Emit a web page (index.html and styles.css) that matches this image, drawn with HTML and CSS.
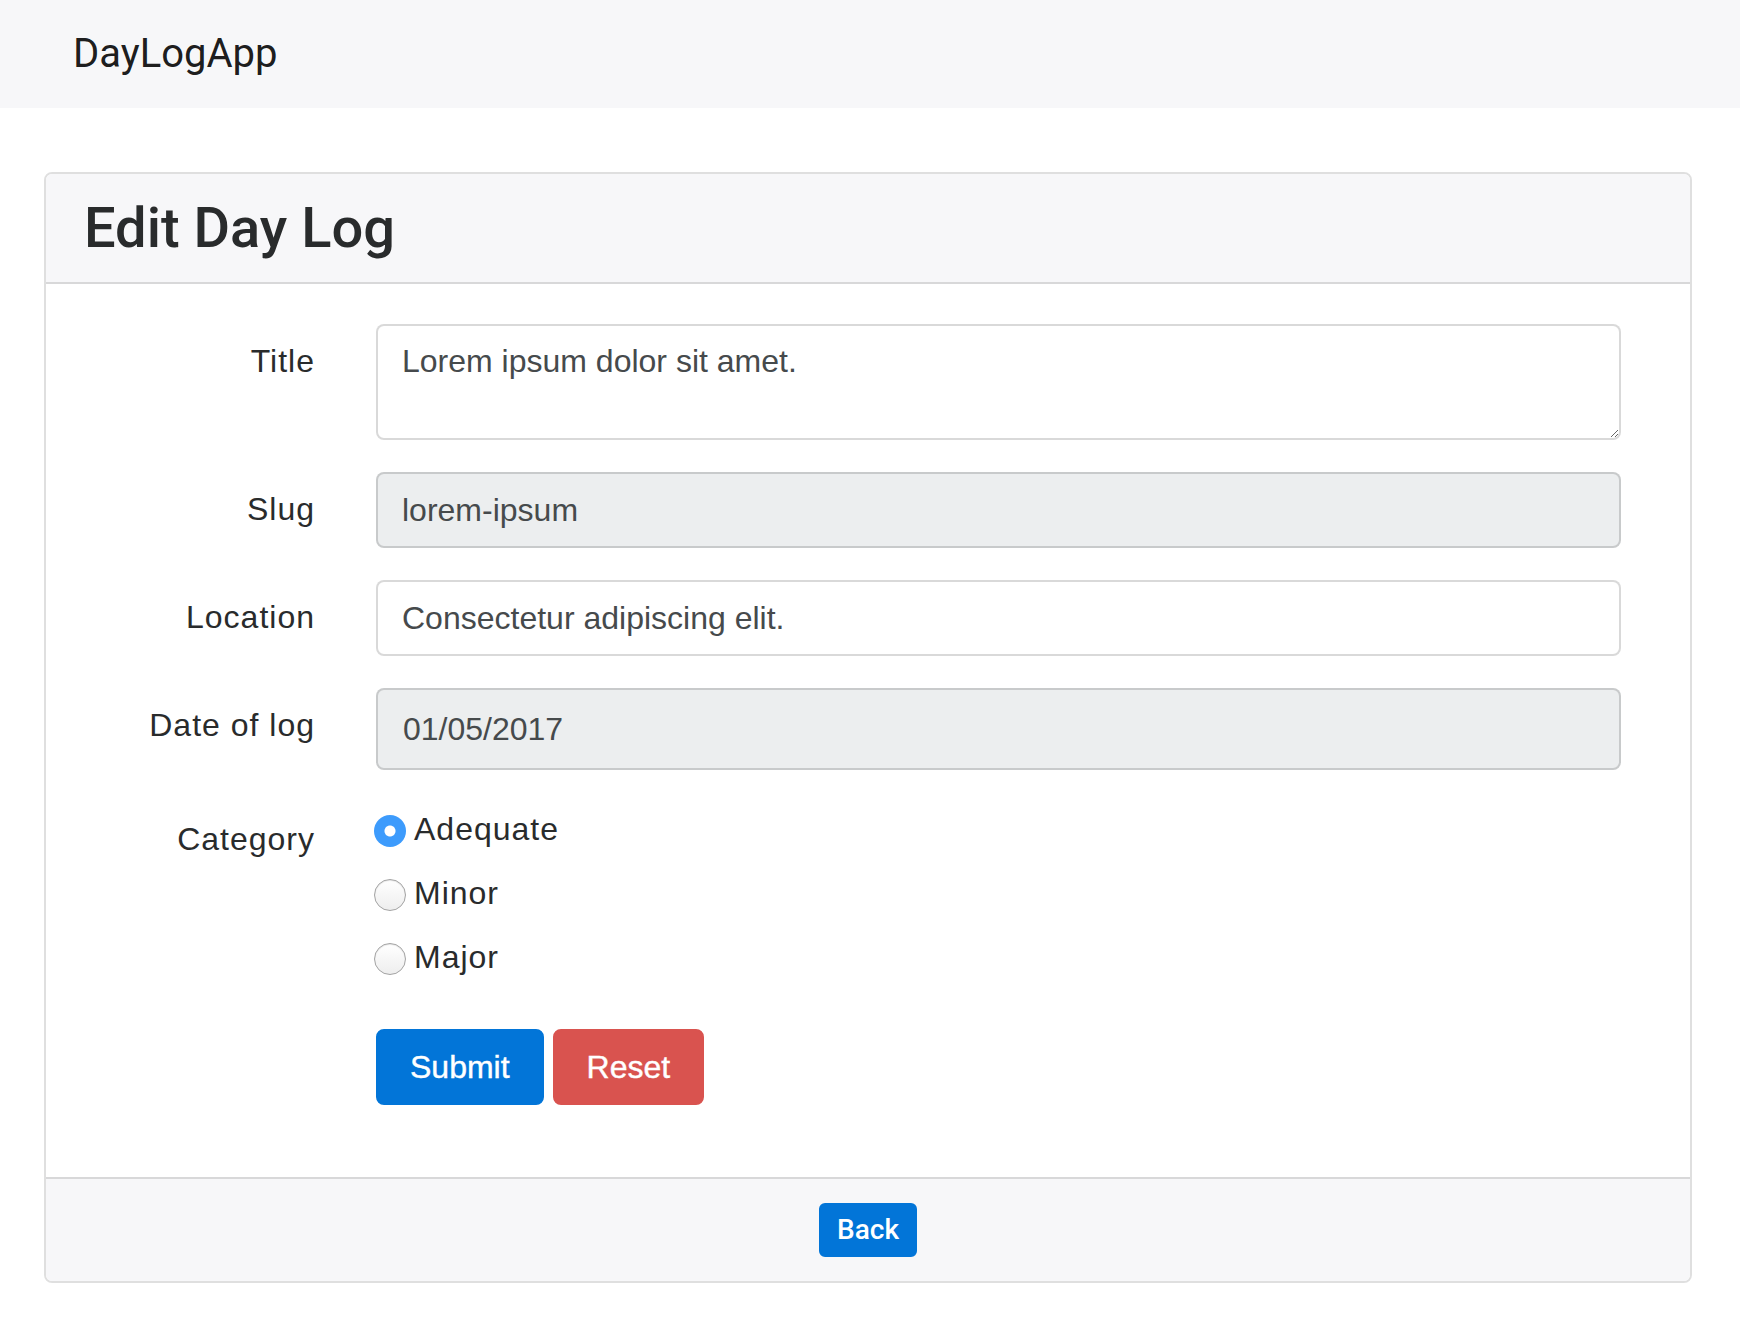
FILE: index.html
```html
<!DOCTYPE html>
<html lang="en">
<head>
<meta charset="utf-8">
<title>DayLogApp</title>
<link rel="stylesheet" href="styles.css">
</head>
<body>
<nav class="navbar">
  <a class="brand" href="#">DayLogApp</a>
</nav>
<main class="page">
  <section class="card">
    <header class="card-header">
      <h3 class="card-title">Edit Day Log</h3>
    </header>
    <div class="card-body">
      <form class="form">
        <div class="row">
          <label class="label" for="title">Title</label>
          <textarea id="title" class="control textarea" rows="2">Lorem ipsum dolor sit amet.</textarea>
        </div>
        <div class="row">
          <label class="label" for="slug">Slug</label>
          <input id="slug" class="control readonly" type="text" value="lorem-ipsum" readonly>
        </div>
        <div class="row">
          <label class="label" for="location">Location</label>
          <input id="location" class="control" type="text" value="Consectetur adipiscing elit.">
        </div>
        <div class="row">
          <label class="label" for="date">Date of log</label>
          <input id="date" class="control readonly date" type="text" value="01/05/2017" readonly>
        </div>
        <div class="row">
          <span class="label">Category</span>
          <div class="checks">
            <label class="check"><input class="radio" type="radio" name="cat" checked>Adequate</label>
            <label class="check"><input class="radio" type="radio" name="cat">Minor</label>
            <label class="check"><input class="radio" type="radio" name="cat">Major</label>
          </div>
        </div>
        <div class="row">
          <span class="label"></span>
          <div class="actions">
            <button type="submit" class="btn btn-primary">Submit</button>
            <button type="reset" class="btn btn-danger">Reset</button>
          </div>
        </div>
      </form>
    </div>
    <footer class="card-footer">
      <a class="btn-sm" href="#">Back</a>
    </footer>
  </section>
</main>
</body>
</html>
```
FILE: styles.css
```css
* { box-sizing: border-box; }

body {
  margin: 0;
  background: #fff;
  color: #292b2c;
  font-family: "Liberation Sans", Arial, sans-serif;
}

.navbar {
  height: 108px;
  background: #f7f7f9;
  padding: 16px 32px 16px 73px;
}

.brand {
  display: inline-block;
  padding: 8px 0;
  font-family: Roboto, "Liberation Sans", sans-serif;
  font-size: 40px;
  line-height: 60px;
  color: rgba(0, 0, 0, .9);
  text-decoration: none;
}

.page {
  padding: 64px 48px 44px 44px;
}

.card {
  border: 2px solid rgba(0, 0, 0, .125);
  border-radius: 8px;
  overflow: hidden;
}

.card-header {
  background: #f7f7f9;
  padding: 24px 40px 24px 38px;
  border-bottom: 2px solid rgba(0, 0, 0, .125);
}

.card-title {
  margin: 0;
  font-family: Roboto, "Liberation Sans", sans-serif;
  font-weight: 500;
  font-size: 56px;
  line-height: 60px;
  color: #292b2c;
}

.card-body {
  padding: 40px;
}

.form {
  padding-right: 29px;
}

.row {
  display: grid;
  grid-template-columns: 229px 1fr;
  column-gap: 61px;
  margin-bottom: 32px;
}

.label {
  text-align: right;
  padding-top: 13px;
  font-size: 32px;
  line-height: 48px;
  letter-spacing: 1px;
  color: #292b2c;
}

.control {
  display: block;
  width: 100%;
  margin: 0;
  height: 76px;
  padding: 16px 24px;
  font-family: "Liberation Sans", Arial, sans-serif;
  font-size: 32px;
  line-height: 40px;
  color: #464a4c;
  background: #fff;
  border: 2px solid rgba(0, 0, 0, .15);
  border-radius: 8px;
  outline: none;
}

.textarea {
  height: 116px;
  padding-top: 15px;
  resize: vertical;
}

.readonly {
  background: #eceeef;
}

.date {
  height: 82px;
  padding: 19px 25px;
}

.checks {
  padding-top: 3px;
}

.check {
  display: block;
  position: relative;
  padding-left: 38px;
  margin-bottom: 16px;
  font-size: 32px;
  line-height: 48px;
  letter-spacing: 1px;
  color: #292b2c;
}

.radio {
  position: absolute;
  left: -2px;
  top: 10px;
  margin: 0;
  width: 32px;
  height: 32px;
  border-radius: 50%;
  -webkit-appearance: none;
  appearance: none;
  border: 1px solid #a3a3a3;
  background: linear-gradient(#ffffff, #eeeeee);
  box-shadow: inset 0 1px 1px rgba(0, 0, 0, .1);
}

.radio:checked {
  border: none;
  box-shadow: none;
  background: radial-gradient(circle, #ffffff 0 5px, #3d9bfc 6px);
}

.actions {
  display: flex;
  gap: 9px;
}

.btn {
  margin: 0;
  padding: 16px 32px;
  font-family: "Liberation Sans", Arial, sans-serif;
  font-size: 32px;
  line-height: 40px;
  color: #fff;
  border: 2px solid transparent;
  border-radius: 8px;
  cursor: pointer;
  -webkit-text-stroke: 0.4px #fff;
}

.btn-primary {
  background: #0275d8;
  border-color: #0275d8;
}

.btn-danger {
  background: #d9534f;
  border-color: #d9534f;
}

.card-footer {
  background: #f7f7f9;
  border-top: 2px solid rgba(0, 0, 0, .125);
  padding: 24px 40px;
  text-align: center;
}

.btn-sm {
  display: inline-block;
  padding: 8px 16px;
  font-family: Roboto, "Liberation Sans", sans-serif;
  font-weight: 500;
  font-size: 28px;
  line-height: 34px;
  color: #fff;
  background: #0275d8;
  border: 2px solid #0275d8;
  border-radius: 6px;
  text-decoration: none;
}
```
